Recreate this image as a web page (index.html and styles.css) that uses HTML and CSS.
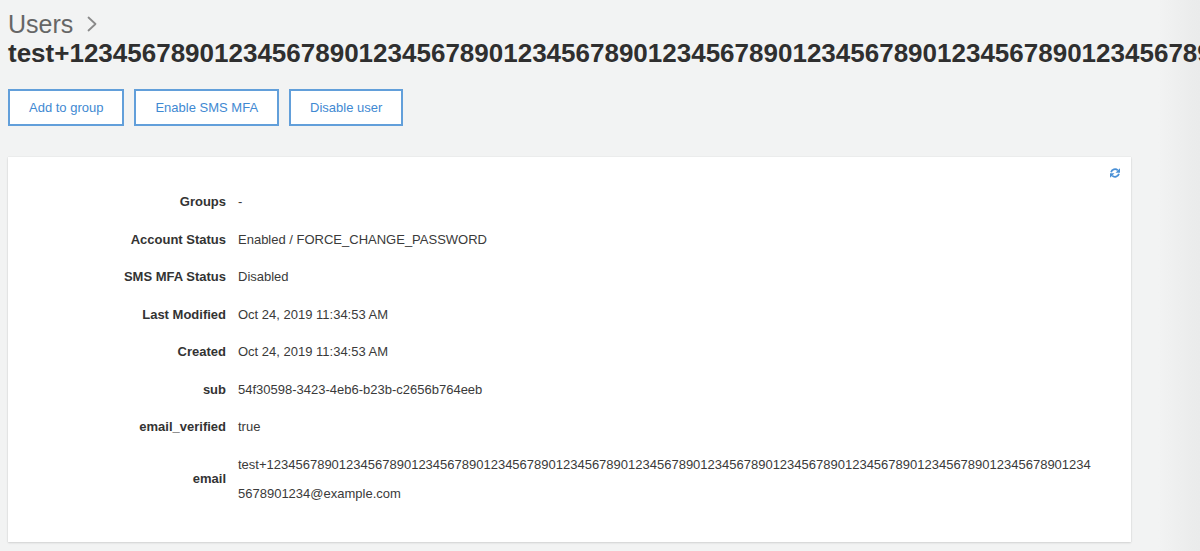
FILE: index.html
```html
<!DOCTYPE html>
<html lang="en">
<head>
<meta charset="utf-8">
<title>Users</title>
<link rel="stylesheet" href="styles.css">
</head>
<body>
<div class="page">
  <div class="crumb">
    <span class="crumb-link">Users</span>
    <svg class="chev" width="10" height="16" viewBox="0 0 10 16"><polyline points="1.5,1.5 8.5,8 1.5,14.5" fill="none" stroke="#8a8a8a" stroke-width="1.8" stroke-linecap="round" stroke-linejoin="round"/></svg>
  </div>
  <h1 class="title">test+1234567890123456789012345678901234567890123456789012345678901234567890123456789012345678901234567890123456789012345678901234@example.com</h1>
  <div class="actions">
    <button class="btn">Add to group</button>
    <button class="btn">Enable SMS MFA</button>
    <button class="btn">Disable user</button>
  </div>
  <div class="card">
    <svg class="refresh" width="12" height="12" viewBox="0 0 24 24">
      <path d="M4.2 10.5 A8 8 0 0 1 17.6 6.6" fill="none" stroke="#4a90d6" stroke-width="3.6"/>
      <polygon points="22,2.5 22,11.5 13,11.5" fill="#4a90d6"/>
      <path d="M19.8 13.5 A8 8 0 0 1 6.4 17.4" fill="none" stroke="#4a90d6" stroke-width="3.6"/>
      <polygon points="2,21.5 2,12.5 11,12.5" fill="#4a90d6"/>
    </svg>
    <dl class="details">
      <dt>Groups</dt><dd>-</dd>
      <dt>Account Status</dt><dd>Enabled / FORCE_CHANGE_PASSWORD</dd>
      <dt>SMS MFA Status</dt><dd>Disabled</dd>
      <dt>Last Modified</dt><dd>Oct 24, 2019 11:34:53 AM</dd>
      <dt>Created</dt><dd>Oct 24, 2019 11:34:53 AM</dd>
      <dt>sub</dt><dd>54f30598-3423-4eb6-b23b-c2656b764eeb</dd>
      <dt>email_verified</dt><dd>true</dd>
      <dt>email</dt><dd class="wrap">test+1234567890123456789012345678901234567890123456789012345678901234567890123456789012345678901234567890123456789012345678901234@example.com</dd>
    </dl>
  </div>
</div>
</body>
</html>
```

FILE: styles.css
```css
html, body {
  margin: 0;
  padding: 0;
}
body {
  width: 1200px;
  height: 551px;
  overflow: hidden;
  background: linear-gradient(to right, #f2f3f3 0, #f2f3f3 1158px, #ebecec 1192px, #eaebeb 1200px);
  font-family: "Liberation Sans", Arial, Helvetica, sans-serif;
  color: #333;
}
.page {
  padding: 10px 8px 0 8px;
}
.crumb {
  display: flex;
  align-items: center;
  height: 28px;
}
.crumb-link {
  font-size: 25px;
  line-height: 28px;
  color: #666;
}
.chev {
  margin-left: 14px;
}
.title {
  margin: 0;
  font-size: 26px;
  line-height: 30px;
  font-weight: bold;
  color: #2f2f2f;
  white-space: nowrap;
}
.actions {
  display: flex;
  gap: 10px;
  margin-top: 21px;
}
.btn {
  height: 37px;
  padding: 0 19px;
  border: 2px solid #629fda;
  background: #fff;
  color: #3f89d2;
  font-family: "Liberation Sans", Arial, Helvetica, sans-serif;
  font-size: 13px;
  border-radius: 0;
}
.card {
  position: relative;
  width: 1123px;
  box-sizing: border-box;
  margin-top: 31px;
  background: #fff;
  padding: 30px 0 34.5px 0;
  box-shadow: 0 1px 2px rgba(0, 0, 0, 0.12), 0 0 1px rgba(0, 0, 0, 0.12);
}
.refresh {
  position: absolute;
  top: 10px;
  right: 10px;
}
.details {
  display: grid;
  grid-template-columns: 218px 855px;
  column-gap: 12px;
  row-gap: 8.5px;
  margin: 0;
  font-size: 13px;
  line-height: 29px;
}
.details dt {
  text-align: right;
  font-weight: bold;
  color: #333;
  align-self: center;
}
.details dd {
  margin: 0;
  color: #3a3a3a;
}
.details .wrap {
  word-break: break-all;
}
```
